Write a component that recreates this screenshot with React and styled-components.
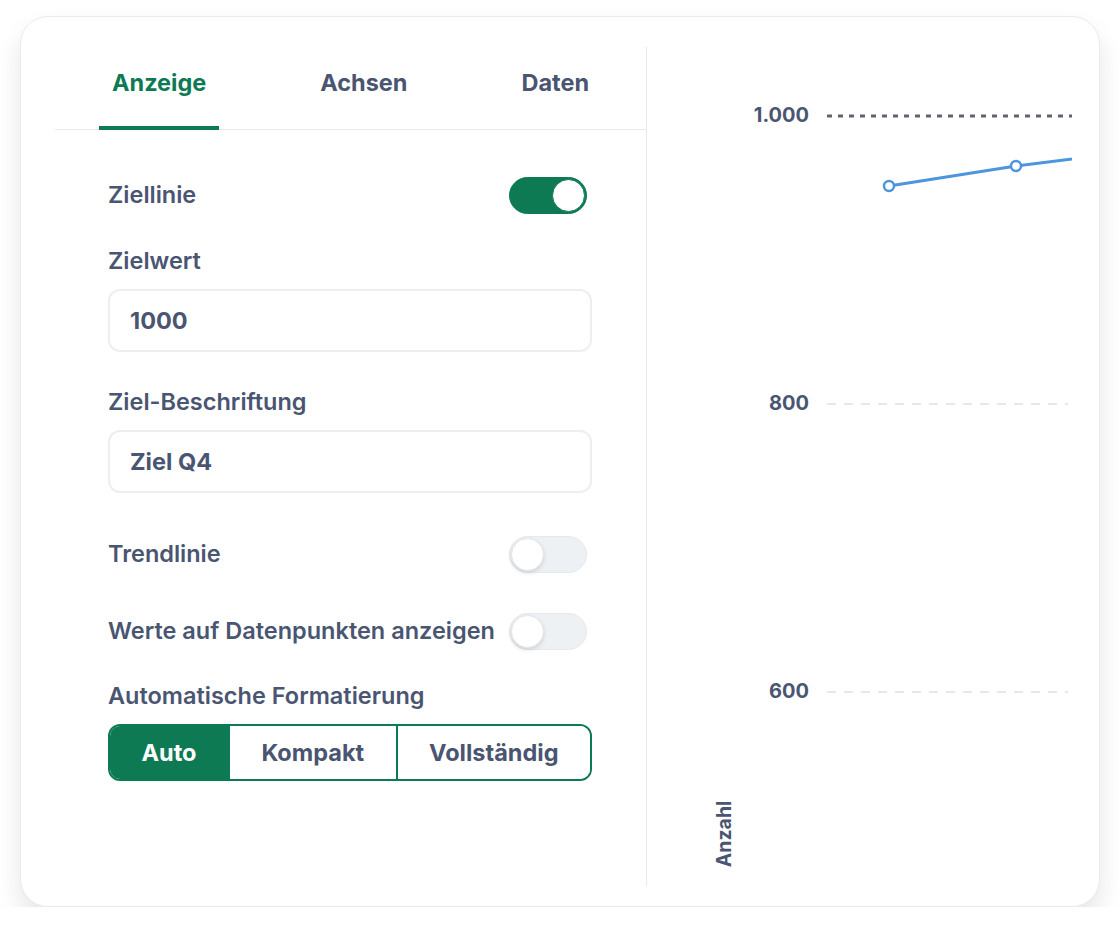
import React from 'react';
import styled, { createGlobalStyle } from 'styled-components';

const ink = '#4a5572';
const green = '#0d7a53';

const Global = createGlobalStyle`
    body {
        margin: 0;
        background: #ffffff;
        font-family: Inter, "Noto Sans", sans-serif;
        color: ${ink};
    }
`

const Card = styled.div`
    width: 1080px;
    height: 891px;
    margin: 16px 0 0 20px;
    box-sizing: border-box;
    padding: 30px 27px 20px 34px;
    display: flex;
    background: #fff;
    border: 1px solid #ebebeb;
    border-radius: 28px;
    box-shadow: 0 14px 26px rgba(0, 0, 0, 0.1);
    overflow: hidden;
`

const Settings = styled.div`
    width: 591px;
    flex: none;
    display: flex;
    flex-direction: column;
    border-right: 1px solid #e8e9ec;
`

const Tabs = styled.div`
    height: 82px;
    display: flex;
    justify-content: space-around;
    border-bottom: 1px solid #e6e8eb;
`

const Tab = styled.div`
    padding: 0 13px 9px;
    display: flex;
    align-items: center;
    font-size: 23.5px;
    font-weight: 700;
    color: ${p => (p.$active ? green : ink)};
    border-bottom: 4px solid ${p => (p.$active ? green : 'transparent')};
    margin-bottom: -1px;
`

const Form = styled.div`
    padding: 47px 54px 0 53px;
    display: flex;
    flex-direction: column;
`

const Row = styled.div`
    display: flex;
    align-items: center;
    justify-content: space-between;
    height: 36px;
    margin-top: ${p => p.$top || 0}px;
`

const Label = styled.div`
    font-size: 23.5px;
    font-weight: 600;
    line-height: 28px;
`

const Field = styled.div`
    display: flex;
    flex-direction: column;
    gap: 14px;
    margin-top: ${p => p.$top || 0}px;
`

const Input = styled.div`
    height: 63px;
    flex: none;
    box-sizing: border-box;
    border: 2px solid #eceef1;
    border-radius: 12px;
    padding: 0 20px;
    display: flex;
    align-items: center;
    font-size: 23.5px;
    font-weight: 700;
`

const Track = styled.div`
    width: 78px;
    height: 37px;
    margin-right: 5px;
    flex: none;
    box-sizing: border-box;
    border-radius: 19px;
    padding: 1px;
    display: flex;
    justify-content: ${p => (p.$on ? 'flex-end' : 'flex-start')};
    background: ${p => (p.$on ? green : '#eef1f4')};
    border: 1px solid ${p => (p.$on ? green : '#e6e9ed')};
`

const Knob = styled.div`
    width: 33px;
    height: 33px;
    box-sizing: border-box;
    border-radius: 50%;
    background: #fff;
    border: 1px solid ${p => (p.$on ? green : '#e3e6ea')};
    box-shadow: ${p => (p.$on ? 'none' : '0 2px 4px rgba(0,0,0,0.12)')};
`

const Segmented = styled.div`
    height: 57px;
    flex: none;
    display: flex;
    box-sizing: border-box;
    border: 2px solid ${green};
    border-radius: 12px;
    overflow: hidden;
`

const Segment = styled.div`
    flex: auto;
    display: flex;
    align-items: center;
    justify-content: center;
    font-size: 23.5px;
    font-weight: 700;
    color: ${p => (p.$active ? '#fff' : ink)};
    background: ${p => (p.$active ? green : '#fff')};
    & + & {
        border-left: 2px solid ${green};
    }
`

const ChartPane = styled.div`
    flex: 1;
    overflow: hidden;
`

const Toggle = ({ on }) => (
    <Track $on={on}>
        <Knob $on={on} />
    </Track>
)

const ticks = [
    { y: 358, label: '800' },
    { y: 646, label: '600' },
]

const tickText = {
    x: 162,
    textAnchor: 'end',
    dominantBaseline: 'middle',
    fontSize: 20,
    fontWeight: 700,
    fill: ink,
    fontFamily: 'Inter, sans-serif',
}

const Chart = () => (
    <svg width="426" height="840" viewBox="0 0 426 840">
        <text {...tickText} y="70">1.000</text>
        <line x1="180" y1="69" x2="426" y2="69" stroke="#5f6470" strokeWidth="3" strokeDasharray="5 6" />
        {ticks.map(t => (
            <g key={t.y}>
                <text {...tickText} y={t.y}>{t.label}</text>
                <line x1="180" y1={t.y - 1} x2="421" y2={t.y - 1} stroke="#dde1e6" strokeWidth="1.5" strokeDasharray="9 8" />
            </g>
        ))}
        <polyline points="242,139 369,119 480,105" fill="none" stroke="#4d95dd" strokeWidth="3" />
        <circle cx="242" cy="139" r="5" fill="#fff" stroke="#4d95dd" strokeWidth="2.5" />
        <circle cx="369" cy="119" r="5" fill="#fff" stroke="#4d95dd" strokeWidth="2.5" />
        <text x="0" y="0" transform="translate(84 787) rotate(-90)" textAnchor="middle" fontSize="19.5" fontWeight="700" fill={ink} fontFamily="Inter, sans-serif">Anzahl</text>
    </svg>
)

const App = () => {
    return (
        <>
            <Global />
            <Card>
                <Settings>
                    <Tabs>
                        <Tab $active>Anzeige</Tab>
                        <Tab>Achsen</Tab>
                        <Tab>Daten</Tab>
                    </Tabs>
                    <Form>
                        <Row>
                            <Label>Ziellinie</Label>
                            <Toggle on />
                        </Row>
                        <Field $top={34}>
                            <Label>Zielwert</Label>
                            <Input>1000</Input>
                        </Field>
                        <Field $top={36}>
                            <Label>Ziel-Beschriftung</Label>
                            <Input>Ziel Q4</Input>
                        </Field>
                        <Row $top={43}>
                            <Label>Trendlinie</Label>
                            <Toggle />
                        </Row>
                        <Row $top={41}>
                            <Label>Werte auf Datenpunkten anzeigen</Label>
                            <Toggle />
                        </Row>
                        <Field $top={33}>
                            <Label>Automatische Formatierung</Label>
                            <Segmented>
                                <Segment $active>Auto</Segment>
                                <Segment>Kompakt</Segment>
                                <Segment>Vollständig</Segment>
                            </Segmented>
                        </Field>
                    </Form>
                </Settings>
                <ChartPane>
                    <Chart />
                </ChartPane>
            </Card>
        </>
    )
}

export default App
